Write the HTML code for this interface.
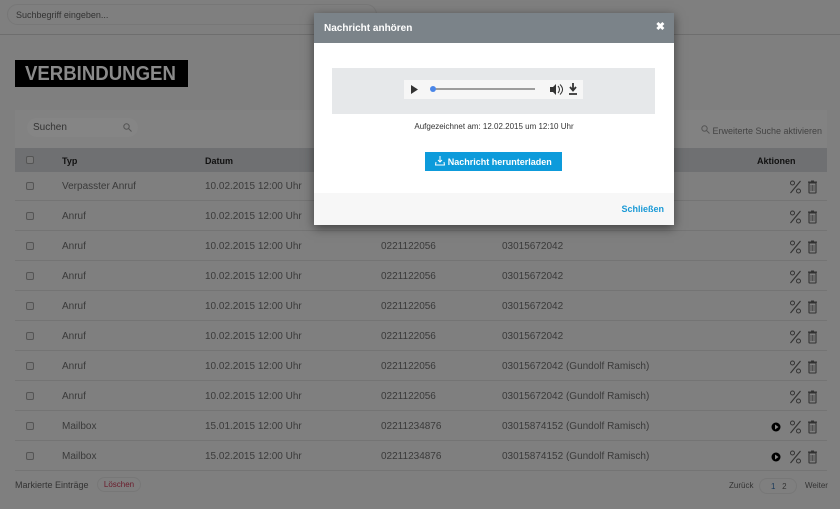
<!DOCTYPE html>
<html><head><meta charset="utf-8"><style>
*{box-sizing:border-box;margin:0;padding:0}
body{width:840px;height:509px;overflow:hidden;background:#7f7f7f;font-family:"Liberation Sans",sans-serif;position:relative;color:#3a3a3a;font-size:10px}
.top{position:absolute;left:0;top:0;width:840px;height:35px;border-bottom:1px solid #6e6e6e;background:#7f7f7f}
.sb{position:absolute;left:7px;top:4px;width:370px;height:21px;border:1px solid #777;border-radius:11px;padding:5px 8px;font-size:9px;color:#333}
.title{position:absolute;left:15px;top:60px;width:173px;height:27px;background:#000;overflow:hidden}
.title span{position:absolute;left:10px;top:3px;color:#8a8a8a;font-weight:bold;font-size:20px;transform:scaleX(0.93);transform-origin:left;white-space:nowrap}
.panel{position:absolute;left:15px;top:110px;width:812px;height:38px;background:#828282}
.srch{position:absolute;left:27px;top:118px;width:111px;height:19px;border-radius:10px;background:#858585;padding:4px 6px;font-size:10px;color:#333}
.erw{position:absolute;right:18px;top:125px;font-size:9px;color:#444}
.hdr{position:absolute;left:15px;top:148px;width:812px;height:24px;background:#6f7072;font-weight:bold;color:#111;font-size:9px}
.hdr span,.row span{position:absolute;top:8px}
.row{position:absolute;left:15px;width:812px;height:30px;border-bottom:1px solid #747474;font-size:10px;color:#3a3a3a}
.row span{top:10px}
.cb{position:absolute;left:11px;width:8px;height:8px;border:1px solid #555;border-radius:2px;background:#7a7a7a}
.ic{position:absolute;left:774px;top:8px}
.modal{position:absolute;left:314px;top:13px;width:360px;height:212px;background:#fff;box-shadow:0 3px 10px rgba(0,0,0,.5)}
.mh{height:30px;background:#7b8389;color:#fff;font-weight:bold;font-size:10px;padding:10px 10px}
.x{position:absolute;right:9px;top:7px;color:#fff;font-weight:bold;font-size:11px}
.aud{position:absolute;left:18px;top:55px;width:323px;height:46px;background:#e6e8ea}
.pl{position:absolute;left:72px;top:12px;width:179px;height:19px;background:#f6f6f6}
.rec{position:absolute;left:0;top:109px;width:360px;text-align:center;font-size:8px;color:#333}
.btn{position:absolute;left:111px;top:139px;width:137px;height:19px;background:#0d9bdb;color:#fff;font-weight:bold;font-size:9px;text-align:center;padding-top:4px}
.mf{position:absolute;left:0;top:180px;width:360px;height:32px;background:#f7f7f7}
.sch{position:absolute;right:10px;top:11px;color:#1b9ad6;font-weight:bold;font-size:9px}
</style></head><body>
<svg width="0" height="0" style="position:absolute"><defs>
<g id="act">
<circle cx="3.5" cy="4" r="2" stroke="#333" fill="none" stroke-width="1"/>
<circle cx="9.5" cy="12" r="2" stroke="#333" fill="none" stroke-width="1"/>
<path d="M1.5,14 L11.5,2" stroke="#333" stroke-width="1.1"/>
<rect x="20" y="4" width="7" height="10" rx="0.5" fill="none" stroke="#333" stroke-width="1.1"/>
<rect x="19" y="2.5" width="9" height="1.3" fill="#333"/><rect x="22" y="1.5" width="3" height="1.3" fill="#333"/>
<path d="M22,6 v6 M23.5,6 v6 M25,6 v6" stroke="#333" stroke-width="0.6"/>
</g>
<g id="play"><circle cx="5" cy="8" r="4.5" fill="#000"/><polygon points="4,5.5 4,10.5 7.5,8" fill="#888"/></g>
</defs></svg>
<div class="top"><div class="sb">Suchbegriff eingeben...</div></div>
<div class="title"><span>VERBINDUNGEN</span></div>
<div class="panel"></div>
<div class="srch">Suchen<svg width="9" height="9" style="position:absolute;right:6px;top:5px"><circle cx="3.5" cy="3.5" r="2.7" stroke="#555" fill="none"/><path d="M5.5,5.5 L8.5,8.5" stroke="#555"/></svg></div>
<div class="erw"><svg width="9" height="9"><circle cx="3.5" cy="3.5" r="2.7" stroke="#555" fill="none"/><path d="M5.5,5.5 L8.5,8.5" stroke="#555"/></svg> Erweiterte Suche aktivieren</div>
<div class="hdr"><div class="cb" style="top:8px"></div><span style="left:47px">Typ</span><span style="left:190px">Datum</span><span style="left:742px">Aktionen</span></div>

<div class="row" style="top:171px"><div class="cb" style="top:11px"></div><span style="left:47px">Verpasster Anruf</span><span style="left:190px">10.02.2015 12:00 Uhr</span><svg class="ic" width="32" height="16"><use href="#act"/></svg></div>
<div class="row" style="top:201px"><div class="cb" style="top:11px"></div><span style="left:47px">Anruf</span><span style="left:190px">10.02.2015 12:00 Uhr</span><svg class="ic" width="32" height="16"><use href="#act"/></svg></div>
<div class="row" style="top:231px"><div class="cb" style="top:11px"></div><span style="left:47px">Anruf</span><span style="left:190px">10.02.2015 12:00 Uhr</span><span style="left:366px">0221122056</span><span style="left:487px">03015672042</span><svg class="ic" width="32" height="16"><use href="#act"/></svg></div>
<div class="row" style="top:261px"><div class="cb" style="top:11px"></div><span style="left:47px">Anruf</span><span style="left:190px">10.02.2015 12:00 Uhr</span><span style="left:366px">0221122056</span><span style="left:487px">03015672042</span><svg class="ic" width="32" height="16"><use href="#act"/></svg></div>
<div class="row" style="top:291px"><div class="cb" style="top:11px"></div><span style="left:47px">Anruf</span><span style="left:190px">10.02.2015 12:00 Uhr</span><span style="left:366px">0221122056</span><span style="left:487px">03015672042</span><svg class="ic" width="32" height="16"><use href="#act"/></svg></div>
<div class="row" style="top:321px"><div class="cb" style="top:11px"></div><span style="left:47px">Anruf</span><span style="left:190px">10.02.2015 12:00 Uhr</span><span style="left:366px">0221122056</span><span style="left:487px">03015672042</span><svg class="ic" width="32" height="16"><use href="#act"/></svg></div>
<div class="row" style="top:351px"><div class="cb" style="top:11px"></div><span style="left:47px">Anruf</span><span style="left:190px">10.02.2015 12:00 Uhr</span><span style="left:366px">0221122056</span><span style="left:487px">03015672042 (Gundolf Ramisch)</span><svg class="ic" width="32" height="16"><use href="#act"/></svg></div>
<div class="row" style="top:381px"><div class="cb" style="top:11px"></div><span style="left:47px">Anruf</span><span style="left:190px">10.02.2015 12:00 Uhr</span><span style="left:366px">0221122056</span><span style="left:487px">03015672042 (Gundolf Ramisch)</span><svg class="ic" width="32" height="16"><use href="#act"/></svg></div>
<div class="row" style="top:411px"><div class="cb" style="top:11px"></div><span style="left:47px">Mailbox</span><span style="left:190px">15.01.2015 12:00 Uhr</span><span style="left:366px">02211234876</span><span style="left:487px">03015874152 (Gundolf Ramisch)</span><svg class="ic" style="left:756px" width="12" height="16"><use href="#play"/></svg><svg class="ic" width="32" height="16"><use href="#act"/></svg></div>
<div class="row" style="top:441px"><div class="cb" style="top:11px"></div><span style="left:47px">Mailbox</span><span style="left:190px">15.02.2015 12:00 Uhr</span><span style="left:366px">02211234876</span><span style="left:487px">03015874152 (Gundolf Ramisch)</span><svg class="ic" style="left:756px" width="12" height="16"><use href="#play"/></svg><svg class="ic" width="32" height="16"><use href="#act"/></svg></div>

<div style="position:absolute;left:15px;top:480px;font-size:9px;color:#333">Markierte Einträge</div>
<div style="position:absolute;left:97px;top:477px;width:44px;height:15px;border:1px solid #777;border-radius:8px;font-size:8px;color:#6a1a2a;text-align:center;padding-top:2px">Löschen</div>
<div style="position:absolute;left:729px;top:481px;font-size:8px;color:#333">Zurück</div>
<div style="position:absolute;left:759px;top:478px;width:38px;height:16px;border:1px solid #777;border-radius:8px;font-size:8px;padding:3px 0 0 11px;color:#333"><span style="color:#1a3a5a">1</span>&nbsp;&nbsp; 2</div>
<div style="position:absolute;left:805px;top:481px;font-size:8px;color:#333">Weiter</div>

<div class="modal">
<div class="mh">Nachricht anhören</div><div class="x">&#10006;</div>
<div class="aud"><div class="pl">
<svg width="179" height="19" style="position:absolute;left:0;top:0">
<polygon points="7,5 7,14 14,9.5" fill="#333"/>
<line x1="29" y1="9" x2="131" y2="9" stroke="#444" stroke-width="1"/>
<circle cx="29" cy="9" r="3" fill="#4a86e8"/>
<polygon points="146,7 149,7 152,4 152,15 149,12 146,12" fill="#333"/>
<path d="M154,6 q3,3.5 0,7 M156,4.5 q5,5 0,10" stroke="#333" fill="none"/>
<path d="M169,3 v7 M166,7 l3,3.5 l3,-3.5 M165,14 h8" stroke="#333" stroke-width="1.8" fill="none"/>
</svg></div></div>
<div class="rec">Aufgezeichnet am: 12.02.2015 um 12:10 Uhr</div>
<div class="btn"><svg width="10" height="10" style="vertical-align:-1px"><path d="M5,0 v6 M3,4 l2,2 l2,-2 M1,6 l-0.5,3 h9 l-0.5,-3" stroke="#fff" fill="none" stroke-width="1"/></svg> Nachricht herunterladen</div>
<div class="mf"><div class="sch">Schließen</div></div>
</div>
</body></html>
